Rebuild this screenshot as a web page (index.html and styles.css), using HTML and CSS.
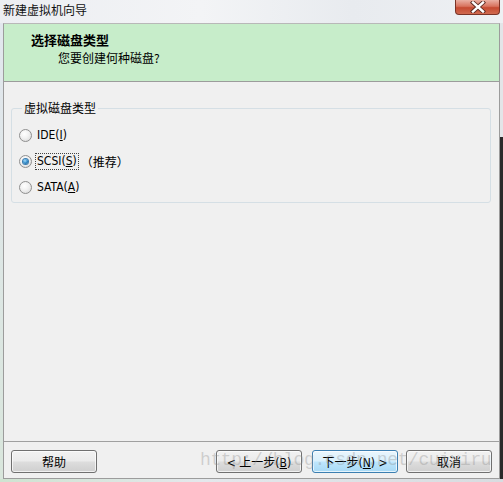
FILE: index.html
```html
<!DOCTYPE html>
<html>
<head>
<meta charset="utf-8">
<link rel="stylesheet" href="styles.css">
</head>
<body>
<div class="window">
  <div class="titlebar">
    <span class="title">新建虚拟机向导</span>
    <div class="close">
      <svg width="16" height="12" viewBox="0 0 16 12">
        <path d="M3 1.5 L13 10.5 M13 1.5 L3 10.5" stroke="#5a2a22" stroke-width="4.2" stroke-linecap="square"/>
        <path d="M3 1.5 L13 10.5 M13 1.5 L3 10.5" stroke="#ffffff" stroke-width="2.4" stroke-linecap="square"/>
      </svg>
    </div>
  </div>
  <div class="mid">
    <div class="frame-left"></div>
    <div class="client">
      <div class="header">
        <div class="h-title">选择磁盘类型</div>
        <div class="h-sub">您要创建何种磁盘?</div>
      </div>
      <div class="body">
        <fieldset class="group">
          <legend>虚拟磁盘类型</legend>
          <div class="opt"><span class="radio"></span><span class="lbl">IDE(<u>I</u>)</span></div>
          <div class="opt"><span class="radio checked"></span><span class="lbl focus">SCSI(<u>S</u>)</span><span class="rec">（推荐）</span></div>
          <div class="opt"><span class="radio"></span><span class="lbl">SATA(<u>A</u>)</span></div>
        </fieldset>
      </div>
      <div class="buttons">
        <button class="btn">帮助</button>
        <div class="spacer"></div>
        <button class="btn back">&lt; 上一步(<u>B</u>)</button>
        <button class="btn next">下一步(<u>N</u>) &gt;</button>
        <button class="btn cancel">取消</button>
      </div>
    </div>
    <div class="frame-right"></div>
  </div>
  <div class="frame-bottom"></div>
  <div class="watermark">http://blog.csdn.net/cuixiru</div>
</div>
</body>
</html>
```
FILE: styles.css
```css
html, body {
  margin: 0;
  padding: 0;
}
body {
  width: 503px;
  height: 482px;
  overflow: hidden;
  font-family: "DejaVu Sans Condensed", "DejaVu Sans", "Noto Sans CJK SC", sans-serif;
  font-size: 12px;
  color: #000;
}
.window {
  position: relative;
  width: 503px;
  height: 482px;
  display: flex;
  flex-direction: column;
  background: #e9ecf0;
}
.titlebar {
  height: 23px;
  flex: none;
  display: flex;
  justify-content: space-between;
  align-items: flex-start;
  padding: 0 3px 0 3px;
  background: linear-gradient(90deg, #eceef2 0%, #f3f4f6 40%, #e8ebef 70%, #eef0f3 100%);
}
.title {
  font-family: "Noto Sans CJK SC", sans-serif;
  line-height: 20px;
  color: #111;
}
.close {
  width: 45px;
  height: 15px;
  box-sizing: border-box;
  border: 1px solid #7a3326;
  border-top: none;
  border-radius: 0 0 4px 4px;
  background: linear-gradient(#eab0a3 0%, #d8735e 45%, #c54a31 55%, #d06a4f 100%);
  display: flex;
  align-items: center;
  justify-content: center;
}
.close svg { display: block; }
.mid {
  flex: 1;
  display: flex;
  min-height: 0;
}
.frame-left {
  width: 3px;
  background: linear-gradient(#e2e7ee, #d9e6dc);
}
.frame-right {
  width: 3px;
  background: linear-gradient(#e3e5e8 0, #e3e5e8 114px, #2a2a2a 114px, #2a2a2a 100%);
}
.frame-bottom {
  height: 3px;
  flex: none;
  background: linear-gradient(90deg, #cfe3d1, #e4e8ec 40%, #d8dce0);
}
.client {
  flex: 1;
  display: flex;
  flex-direction: column;
  border: 1px solid #9c9c9c;
  border-top-color: #b8b8b8;
  background: #f0f0f0;
}
.header {
  height: 50px;
  flex: none;
  background: #c7edca;
  border-bottom: 1px solid #9c9c9c;
  padding-top: 7px;
}
.h-title {
  font-family: "Noto Sans CJK SC", sans-serif;
  font-weight: bold;
  font-size: 13px;
  line-height: 18px;
  padding-left: 27px;
}
.h-sub {
  font-family: "Noto Sans CJK SC", sans-serif;
  line-height: 18px;
  padding-left: 54px;
}
.body {
  flex: 1;
  padding: 19px 8px 0 7px;
}
.group {
  margin: 0;
  border: 1px solid #d5dfe5;
  border-radius: 3px;
  padding: 7px 7px 2px 7px;
  min-width: 0;
}
.group legend {
  font-family: "Noto Sans CJK SC", sans-serif;
  line-height: 14px;
  padding: 0 2px;
  margin-left: 3px;
}
.opt {
  height: 26px;
  display: flex;
  align-items: center;
}
.radio {
  width: 13px;
  height: 13px;
  box-sizing: border-box;
  border-radius: 50%;
  border: 1px solid #8f8f8f;
  background: radial-gradient(circle at 40% 35%, #ffffff 0%, #f1f1f1 45%, #d4d4d4 100%);
  display: flex;
  align-items: center;
  justify-content: center;
  flex: none;
}
.radio.checked::after {
  content: "";
  width: 5px;
  height: 5px;
  border-radius: 50%;
  background: radial-gradient(circle at 40% 35%, #a6dcfb 0%, #2a86c6 55%, #13507f 100%);
  box-shadow: 0 0 0 1px #3a7cb0;
}
.lbl {
  margin-left: 3px;
  padding: 1px 1px;
  border: 1px solid transparent;
  line-height: 13px;
}
.lbl.focus {
  border: 1px dotted #444;
}
.rec {
  font-family: "Noto Sans CJK SC", sans-serif;
  font-feature-settings: "halt";
  margin-left: 8px;
}
.buttons {
  height: 37px;
  flex: none;
  border-top: 1px solid #a0a0a0;
  display: flex;
  align-items: flex-start;
  padding: 8px 7px 0 7px;
  box-sizing: border-box;
}
.spacer { flex: 1; }
.btn {
  width: 86px;
  height: 23px;
  margin: 0;
  padding: 0;
  font: inherit;
  color: #000;
  border: 1px solid #707070;
  border-radius: 3px;
  background: linear-gradient(#f2f2f2 0%, #ebebeb 48%, #dddddd 52%, #cfcfcf 100%);
  box-shadow: inset 0 0 0 1px rgba(255,255,255,0.7);
}
.btn.next {
  margin-left: 10px;
  border-color: #3c7fb1;
  background: linear-gradient(#eaf6fd 0%, #d9f0fc 48%, #bee6fd 52%, #a7d9f5 100%);
}
.btn.cancel {
  margin-left: 8px;
}
.watermark {
  position: absolute;
  left: 200px;
  top: 451px;
  font-family: "Liberation Mono", monospace;
  font-size: 18px;
  line-height: 18px;
  letter-spacing: -0.4px;
  color: rgba(140, 140, 140, 0.35);
  white-space: nowrap;
  pointer-events: none;
}
```
